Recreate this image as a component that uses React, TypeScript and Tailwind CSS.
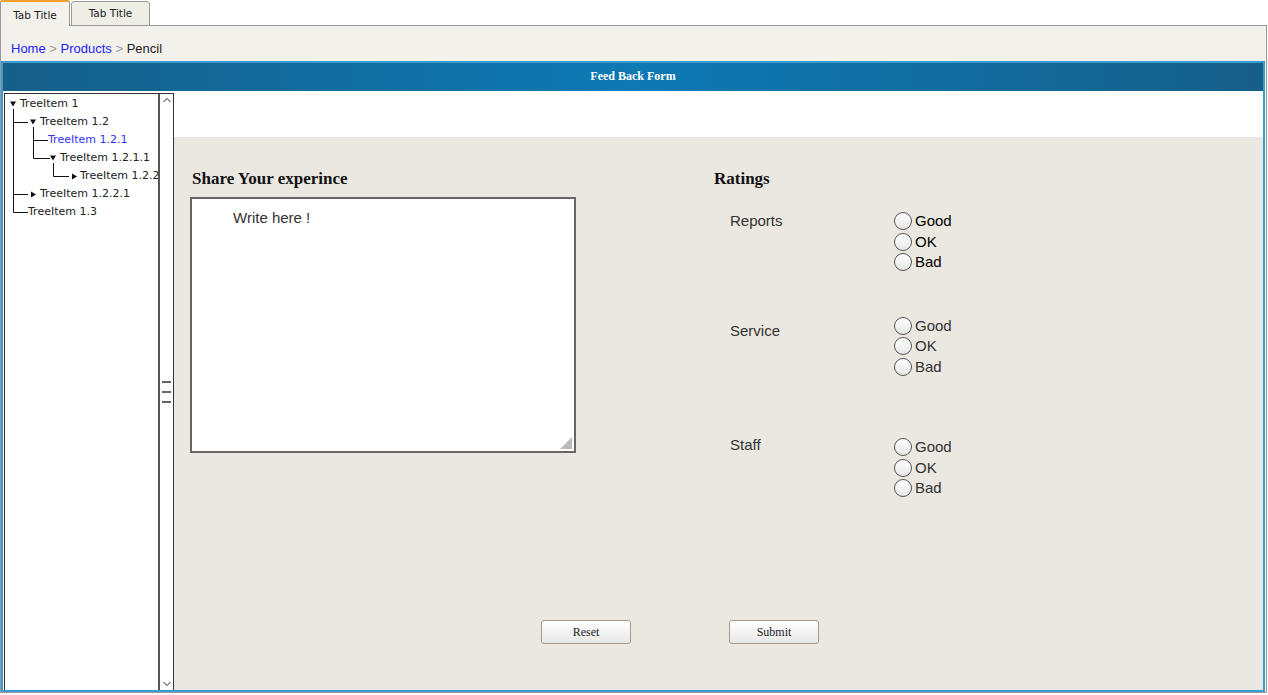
import React from "react"

const tree = [
  { label: "TreeItem 1", pad: 15 },
  { label: "TreeItem 1.2", pad: 35 },
  { label: "TreeItem 1.2.1", pad: 43, active: true },
  { label: "TreeItem 1.2.1.1", pad: 55 },
  { label: "TreeItem 1.2.2.1.1", pad: 75 },
  { label: "TreeItem 1.2.2.1", pad: 35 },
  { label: "TreeItem 1.3", pad: 23 },
]

const ratings = [
  { name: "Reports", mt: "mt-[22px]", labelMt: "mt-0", dark: true },
  { name: "Service", mt: "mt-[43px]", labelMt: "mt-[5px]" },
  { name: "Staff", mt: "mt-[60px]", labelMt: "mt-[-2px]" },
]

function Radio({ label, dark }: { label: string; dark?: boolean }) {
  return (
    <label className="flex items-center h-[20.5px] gap-[3px]">
      <span className="w-[18px] h-[18px] rounded-full border-[1.5px] border-[#555] bg-gradient-to-b from-white to-[#e6e6e6]" />
      <span className={dark ? "text-black" : "text-[#333]"}>{label}</span>
    </label>
  )
}

function TreeLines() {
  return (
    <svg className="absolute left-0 top-[1px]" width="154" height="130" stroke="#111" strokeWidth="1" fill="#111">
      <path d="M8.5 14V117.5M8.5 27.5H23M8.5 99.5H23M8.5 117.5H23" fill="none" />
      <path d="M28.5 32V63.5M28.5 45.5H43M28.5 63.5H45" fill="none" />
      <path d="M48.5 68V81.5H64" fill="none" />
      <path d="M5 6.5h6l-3 5z" stroke="none" />
      <path d="M25 24.5h6l-3 5z" stroke="none" />
      <path d="M45 60.5h6l-3 5z" stroke="none" />
      <path d="M67 78.5v6l5-3z" stroke="none" />
      <path d="M26 96.5v6l5-3z" stroke="none" />
    </svg>
  )
}

export default function App() {
  return (
    <div className="w-[1268px] h-[695px] bg-white flex flex-col overflow-hidden font-['Liberation_Sans',Arial,sans-serif]">
      {/* tabs */}
      <div className="h-[26px] flex items-end relative z-10 font-['DejaVu_Sans',sans-serif] text-[10.5px] text-[#222]">
        <div className="w-[70px] h-[26px] bg-[#f2f1ec] border-t-2 border-t-[#f5a030] border-l border-r border-[#9a9a9a] rounded-t-[2px] flex items-center justify-center pt-[3px]">
          Tab Title
        </div>
        <div className="ml-[1px] w-[79px] h-[25px] bg-[#efeee6] border border-[#9a9a9a] border-b-[#9a9a9a] rounded-t-[3px] flex items-center justify-center">
          Tab Title
        </div>
      </div>
      {/* tab panel */}
      <div className="flex-1 mt-[-1px] mr-[1px] mb-[2px] border border-[#9a9a9a] bg-[#f2f1ec] flex flex-col">
        <div className="h-[35px] pl-[10px] pt-[15px] text-[13px] leading-[16px]">
          <span className="text-[#2323ff]">Home</span>
          <span className="text-[#999]"> &gt; </span>
          <span className="text-[#2323ff]">Products</span>
          <span className="text-[#999]"> &gt; </span>
          <span className="text-[#222]">Pencil</span>
        </div>
        <div className="flex-1 mr-[1px] border-2 border-[#3a9bd3] flex flex-col">
          <div className="h-[28px] pb-[2px] bg-[linear-gradient(90deg,#165f89,#0d79b5_50%,#165f89)] flex items-center justify-center text-white font-bold text-[12px] font-['Liberation_Serif',serif]">
            Feed Back Form
          </div>
          <div className="flex-1 flex bg-white pl-[1px] pt-[2px]">
            {/* tree */}
            <div className="w-[170px] flex border border-[#333] border-b-0">
              <div className="flex-1 relative bg-white pt-[1px] font-['DejaVu_Sans',sans-serif] text-[11px] text-[#222] overflow-hidden">
                <TreeLines />
                {tree.map((t) => (
                  <div
                    key={t.label}
                    className={`h-[18px] leading-[18px] whitespace-nowrap ${t.active ? "text-[#3333ff]" : ""}`}
                    style={{ paddingLeft: t.pad }}
                  >
                    {t.label}
                  </div>
                ))}
              </div>
              <div className="w-[15px] border-l-2 border-[#555] bg-white flex flex-col items-center justify-between py-[2px]">
                <svg width="10" height="8" viewBox="0 0 10 8" fill="none" stroke="#222" strokeWidth="1">
                  <path d="M1.5 6L5 2.5 8.5 6" />
                </svg>
                <div className="flex flex-col gap-[8px]">
                  <div className="w-[9px] h-[2px] bg-[#666]" />
                  <div className="w-[9px] h-[2px] bg-[#666]" />
                  <div className="w-[9px] h-[2px] bg-[#666]" />
                </div>
                <svg width="10" height="8" viewBox="0 0 10 8" fill="none" stroke="#222" strokeWidth="1">
                  <path d="M1.5 2L5 5.5 8.5 2" />
                </svg>
              </div>
            </div>
            {/* content */}
            <div className="flex-1 flex flex-col">
              <div className="h-[44px] bg-white" />
              <div className="flex-1 bg-[#ebe8e2] flex flex-col pt-[32px] pl-[16px]">
                <div className="flex">
                  <div className="w-[524px] flex flex-col">
                    <h2 className="pl-[2px] h-[20px] leading-[20px] text-[17px] font-bold text-[#111] font-['Liberation_Serif',serif]">
                      Share Your experince
                    </h2>
                    <div className="relative mt-[8px] w-[386px] h-[256px] border-2 border-[#666] bg-white pl-[41px] pt-[8px] text-[15px] text-[#333]">
                      Write here !
                      <svg className="absolute right-[2px] bottom-[2px]" width="12" height="12">
                        <path d="M12 0V12H0z" fill="#bbb" />
                      </svg>
                    </div>
                  </div>
                  <div className="flex flex-col">
                    <h2 className="h-[20px] leading-[20px] text-[17px] font-bold text-[#111] font-['Liberation_Serif',serif]">
                      Ratings
                    </h2>
                    {ratings.map((r) => (
                      <div key={r.name} className={`flex ${r.mt} text-[15px]`}>
                        <div className={`w-[180px] pl-[16px] h-[20.5px] leading-[20.5px] text-[#333] ${r.labelMt}`}>
                          {r.name}
                        </div>
                        <div className="flex flex-col">
                          <Radio label="Good" dark={r.dark} />
                          <Radio label="OK" dark={r.dark} />
                          <Radio label="Bad" dark={r.dark} />
                        </div>
                      </div>
                    ))}
                  </div>
                </div>
                <div className="mt-auto mb-[46px] flex pl-[351px] gap-[98px] font-['Liberation_Serif',serif] text-[12px] text-[#222]">
                  <button className="w-[90px] h-[24px] rounded-[3px] border border-[#a89a88] bg-gradient-to-b from-white to-[#e8e8e8]">
                    Reset
                  </button>
                  <button className="w-[90px] h-[24px] rounded-[3px] border border-[#a89a88] bg-gradient-to-b from-white to-[#e8e8e8]">
                    Submit
                  </button>
                </div>
              </div>
            </div>
          </div>
        </div>
      </div>
    </div>
  )
}
